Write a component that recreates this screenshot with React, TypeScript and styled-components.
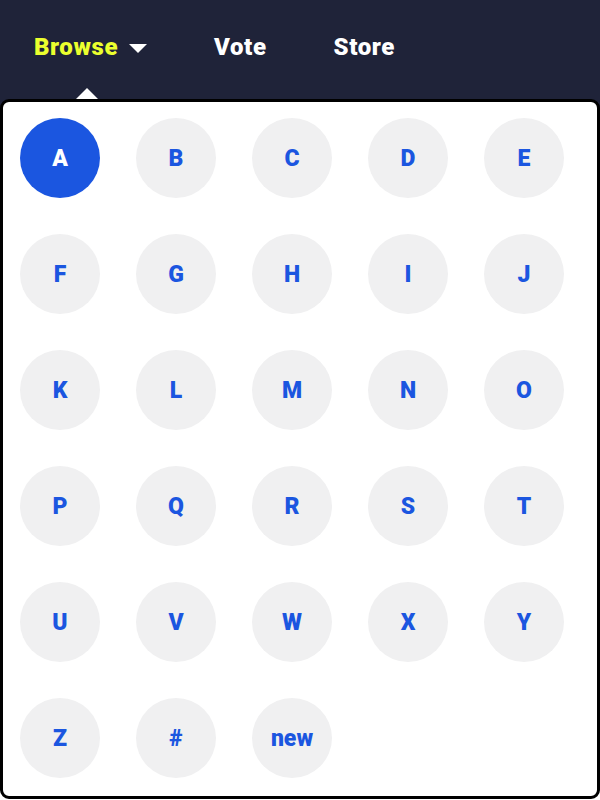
import React from "react";
import styled, { createGlobalStyle } from "styled-components";

const Global = createGlobalStyle`
  html, body { margin: 0; padding: 0; background: #ffffff; }
  body { font-family: Roboto, "Open Sans", sans-serif; }
`;

const Page = styled.div`
  width: 600px;
  height: 800px;
  background: linear-gradient(#1f2339 0 110px, #ffffff 110px);
  display: flex;
  flex-direction: column;
  overflow: hidden;
`;

const Header = styled.nav`
  height: 99px;
  flex: none;
  display: flex;
  align-items: center;
  padding-left: 34px;
  padding-bottom: 5px;
  box-sizing: border-box;
  gap: 67px;
`;

const NavItem = styled.div<{ $active?: boolean }>`
  display: flex;
  align-items: center;
  gap: 11px;
  font-family: Roboto, sans-serif;
  font-weight: 900;
  font-size: 24px;
  letter-spacing: 0.6px;
  color: ${(p) => (p.$active ? "#ebff2e" : "#ffffff")};
`;

const Caret = styled.span`
  width: 0;
  height: 0;
  border-left: 9px solid transparent;
  border-right: 9px solid transparent;
  border-top: 9px solid #ffffff;
  margin-top: 2px;
`;

const Panel = styled.div`
  position: relative;
  flex: none;
  height: 700px;
  box-sizing: border-box;
  border: 3px solid #000000;
  border-radius: 9px;
  background: #ffffff;
  padding: 16px 17px;
  display: grid;
  grid-template-columns: repeat(5, 80px);
  grid-auto-rows: 80px;
  column-gap: 36px;
  row-gap: 36px;
  align-content: start;
`;

const Pointer = styled.span`
  position: absolute;
  top: -14px;
  left: 73px;
  width: 0;
  height: 0;
  border-left: 11px solid transparent;
  border-right: 11px solid transparent;
  border-bottom: 11px solid #ffffff;
`;

const Letter = styled.button<{ $active?: boolean }>`
  width: 80px;
  height: 80px;
  border: none;
  border-radius: 50%;
  padding: 0;
  display: flex;
  align-items: center;
  justify-content: center;
  background: ${(p) => (p.$active ? "#1b56e0" : "#f0f0f1")};
  color: ${(p) => (p.$active ? "#ffffff" : "#1b56e0")};
  font-family: Roboto, sans-serif;
  font-weight: 900;
  font-size: 23px;
  cursor: pointer;
`;

const letters = [
  ..."ABCDEFGHIJKLMNOPQRSTUVWXYZ".split(""),
  "#",
  "new",
];

export default function App() {
  return (
    <>
      <Global />
      <Page>
        <Header>
          <NavItem $active>
            Browse <Caret />
          </NavItem>
          <NavItem>Vote</NavItem>
          <NavItem>Store</NavItem>
        </Header>
        <Panel>
          <Pointer />
          {letters.map((l) => (
            <Letter key={l} $active={l === "A"}>
              {l}
            </Letter>
          ))}
        </Panel>
      </Page>
    </>
  );
}
